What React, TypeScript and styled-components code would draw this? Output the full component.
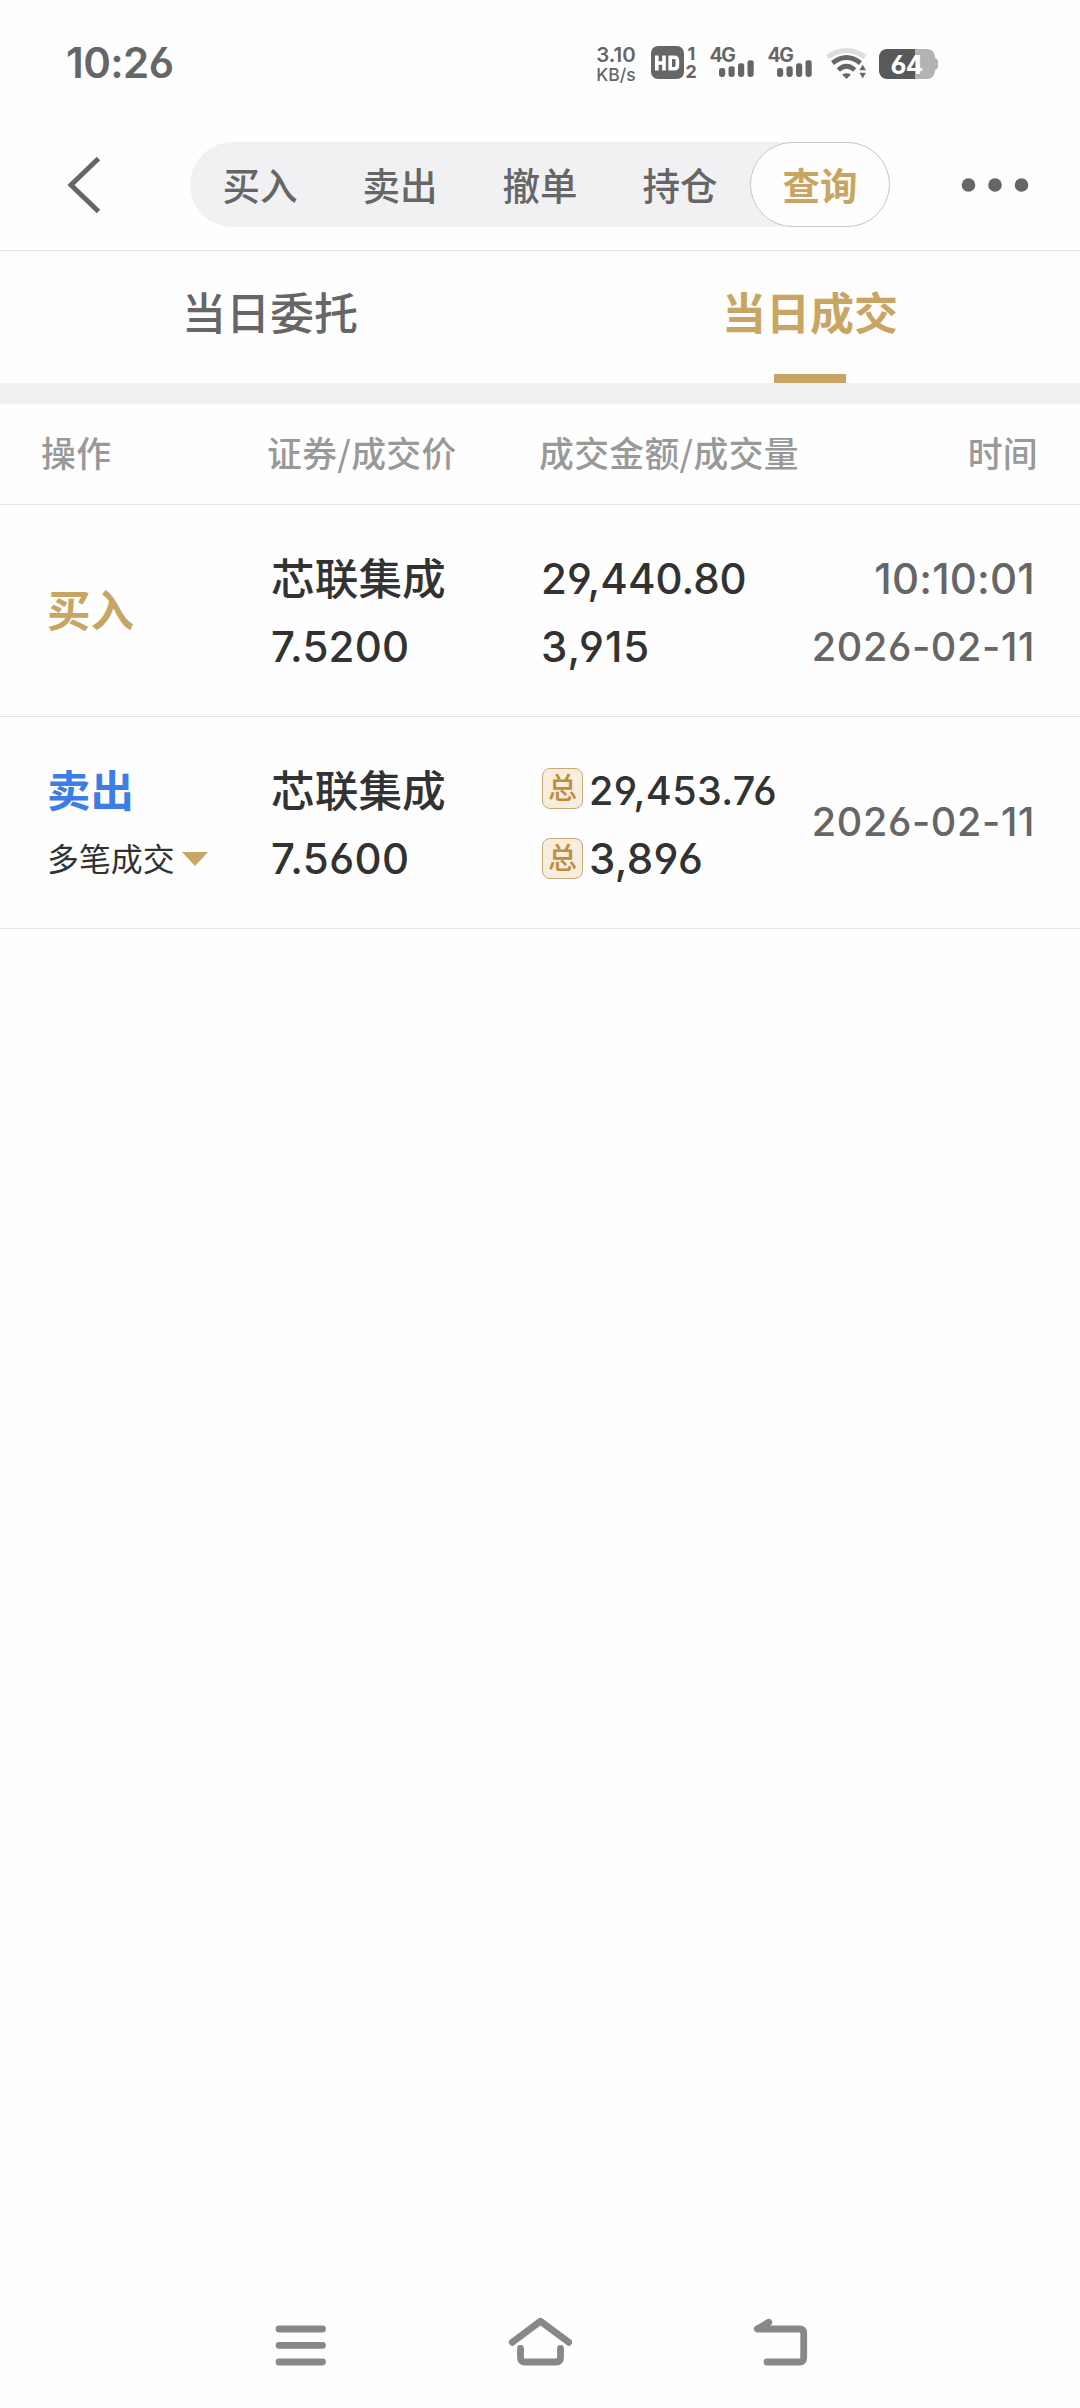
import React from "react";
import styled, { createGlobalStyle } from "styled-components";

const GOLD = "#c9a564";
const BLUE = "#3d7ee6";
const INK = "#323232";
const GREY = "#666666";
const LINE = "#e2e2e2";
const PANEL = "#f1f1f3";

const Global = createGlobalStyle`
  * { box-sizing: border-box; }
  body {
    margin: 0;
    background: #fefefe;
    font-family: Inter, "Noto Sans CJK SC", sans-serif;
    color: ${INK};
  }
`;

const Screen = styled.div`
  width: 1080px;
  height: 2408px;
  display: flex;
  flex-direction: column;
  background: #fefefe;
  overflow: hidden;
`;

const StatusBar = styled.header`
  height: 120px;
  display: flex;
  align-items: flex-start;
  padding: 40px 142px 0 66px;
  color: ${GREY};
`;

const Clock = styled.div`
  flex: 1;
  height: 46px;
  line-height: 46px;
  font-size: 42px;
  font-weight: 600;
  letter-spacing: -0.6px;
  font-feature-settings: "cv03", "cv04";
`;

const NetSpeed = styled.div`
  width: 42px;
  margin-top: 5px;
  display: flex;
  flex-direction: column;
  align-items: center;
  white-space: nowrap;
`;

const SpeedLine = styled.span<{ $size: number; $weight: number; $height: number }>`
  font-size: ${(p) => p.$size}px;
  font-weight: ${(p) => p.$weight};
  line-height: ${(p) => p.$height}px;
`;

const StatusIcons = styled.svg`
  display: block;
  flex: none;
  margin-left: 13px;
  font-family: Inter, sans-serif;
`;

const TopBar = styled.nav`
  height: 131px;
  display: flex;
  align-items: center;
  padding: 0 50px 1px 66px;
  border-bottom: 1px solid ${LINE};
`;

const Segments = styled.div`
  display: flex;
  flex: none;
  width: 700px;
  height: 85px;
  margin: 0 70px 0 88px;
  border-radius: 43px;
  background: ${PANEL};
`;

const Segment = styled.button<{ $active?: boolean }>`
  flex: 1;
  padding: 0 0 3px;
  border: 1px solid ${(p) => (p.$active ? "#c8c8c8" : "transparent")};
  border-radius: 43px;
  background: ${(p) => (p.$active ? "#fefefe" : "transparent")};
  color: ${(p) => (p.$active ? GOLD : GREY)};
  font: ${(p) => (p.$active ? 700 : 500)} 37.5px "Noto Sans CJK SC", sans-serif;
`;

const TopTabs = styled.div`
  display: flex;
  height: 132px;
`;

const Tab = styled.button<{ $active?: boolean }>`
  flex: 1;
  display: flex;
  flex-direction: column;
  align-items: center;
  justify-content: space-between;
  padding: 27px 0 0;
  border: 0;
  background: none;
  color: ${(p) => (p.$active ? GOLD : GREY)};
  font: ${(p) => (p.$active ? 700 : 500)} 44px/66px "Noto Sans CJK SC", sans-serif;

  &::after {
    content: "";
    width: 72px;
    height: 9px;
    background: ${(p) => (p.$active ? GOLD : "transparent")};
  }
`;

const Band = styled.div`
  height: 21px;
  background: ${PANEL};
`;

const HeadRow = styled.div`
  display: grid;
  grid-template-columns: 226px 272px 1fr 100px;
  align-items: center;
  height: 101px;
  padding: 0 42px 4px 41px;
  border-bottom: 1px solid ${LINE};
  color: #999999;
  font: 500 34.8px "Noto Sans CJK SC", sans-serif;
  letter-spacing: 0.35px;
  white-space: nowrap;

  & > :last-child { text-align: right; }
`;

const Row = styled.div`
  display: grid;
  grid-template-columns: 224px 270px 250px 1fr;
  height: 212px;
  padding: 40px 45px 0 47px;
  border-bottom: 1px solid ${LINE};
  white-space: nowrap;
`;

const Cell = styled.div<{ $right?: boolean; $pad?: number }>`
  display: flex;
  flex-direction: column;
  align-items: ${(p) => (p.$right ? "flex-end" : "flex-start")};
  padding-top: ${(p) => p.$pad ?? 0}px;
`;

const Side = styled.span<{ $color: string }>`
  height: 68px;
  line-height: 63px;
  font-family: "Noto Sans CJK SC", sans-serif;
  font-size: 43.5px;
  font-weight: 700;
  color: ${(p) => p.$color};
`;

const StockName = styled.span`
  height: 68px;
  line-height: 62px;
  font-family: "Noto Sans CJK SC", sans-serif;
  font-size: 43.7px;
  font-weight: 500;
`;

const Num = styled.span<{ $size?: number; $spacing?: number; $color?: string }>`
  height: 68px;
  line-height: 68px;
  font-size: ${(p) => p.$size ?? 42}px;
  font-weight: 500;
  letter-spacing: ${(p) => p.$spacing ?? 0}px;
  color: ${(p) => p.$color ?? INK};
  font-feature-settings: "cv03", "cv04";
`;

const Line = styled.div`
  display: flex;
  height: 68px;
`;

const TotalBadge = styled.span<{ $top: number }>`
  width: 41px;
  height: 41px;
  margin: ${(p) => p.$top}px 6px 0 1px;
  border: 1.5px solid #c9a873;
  border-radius: 8px;
  background: #f7eddd;
  color: #be8e3e;
  font: 500 29px/35px "Noto Sans CJK SC", sans-serif;
  text-align: center;
`;

const Multi = styled.div`
  display: flex;
  align-items: center;
  gap: 7px;
  height: 68px;
`;

const MultiLabel = styled.span`
  height: 68px;
  font: 400 31.9px/64px "Noto Sans CJK SC", sans-serif;
`;

const Caret = styled.i`
  border: 13px solid transparent;
  border-top: 14px solid ${GOLD};
  border-bottom: 0;
`;

const SystemNav = styled.footer`
  display: flex;
  justify-content: space-between;
  margin-top: auto;
  height: 108px;
  padding: 16px 268px 0;
`;

const NavIcon = styled.svg`
  fill: none;
  stroke: #888888;
  stroke-width: 6.8;
  stroke-linecap: round;
  stroke-linejoin: round;
`;

const BARS = [
  [0, 9],
  [9.5, 10.8],
  [19, 13.8],
  [28.5, 16.8],
];

function Signal({ x }: { x: number }) {
  return (
    <g transform={`translate(${x} 0)`} fill={GREY}>
      <text x="-0.5" y="22" fontSize="19.5" fontWeight="700" letterSpacing="-1.4">
        4G
      </text>
      {BARS.map(([bx, h]) => (
        <rect key={bx} x={9 + bx} y={37 - h} width="6.2" height={h} rx="2.4" />
      ))}
    </g>
  );
}

/* Origin of this drawing is (650, 40) on the screen. */
function StatusGlyphs() {
  return (
    <StatusIcons width="288" height="46" viewBox="0 0 288 46">
      <rect x="1" y="6" width="33" height="33" rx="7" fill={GREY} />
      <path
        d="M6.8 15.5v15M14 15.5v15M6.8 23h7.200M20.200 17.300v11.400h4q3.200 0 3.200-3.200v-5q0-3.200-3.200-3.200z"
        fill="none"
        stroke="#fefefe"
        strokeWidth="3.6"
      />
      <text x="37.5" y="20" fontSize="18" fontWeight="700" fill={GREY}>1</text>
      <text x="35.6" y="38" fontSize="18" fontWeight="700" fill={GREY}>2</text>
      <Signal x={60} />
      <Signal x={118} />
      <g fill="none" strokeWidth="4.8">
        <path d="M177.5 17Q196.500 4 215 17" stroke="#dddddd" />
        <path d="M182.500 23Q196.500 12 210.500 23" stroke={GREY} />
        <path d="M188.300 30Q196.500 22.500 204.700 30" stroke={GREY} />
      </g>
      <path d="M192 34.500Q196.500 31.800 201 34.500L196.500 39z" fill={GREY} />
      <path d="M209 30.500l3.700-6.500 3.700 6.500zM209 32.500l3.700 6.500 3.700-6.500z" fill={GREY} stroke="#fefefe" strokeWidth="0.6" />
      <rect x="278" y="18" width="10" height="12" rx="4" fill="#b3b3b3" />
      <path d="M236 9h41a8 8 0 0 1 8 8v14a8 8 0 0 1-8 8h-41z" fill="#b3b3b3" />
      <path d="M265 9v30h-28a8 8 0 0 1-8-8V17a8 8 0 0 1 8-8z" fill="#595959" />
      <text
        x="240.500"
        y="33.500"
        fontSize="26"
        fontWeight="700"
        letterSpacing="-0.8"
        fill="#fefefe"
        style={{ fontFeatureSettings: '"cv03"' }}
      >
        64
      </text>
    </StatusIcons>
  );
}

const SEGMENTS = ["买入", "卖出", "撤单", "持仓", "查询"];

export default function App() {
  return (
    <>
      <Global />
      <Screen>
        <StatusBar>
          <Clock>10:26</Clock>
          <NetSpeed>
            <SpeedLine $size={20.5} $weight={600} $height={20}>3.10</SpeedLine>
            <SpeedLine $size={17.5} $weight={500} $height={20}>KB/s</SpeedLine>
          </NetSpeed>
          <StatusGlyphs />
        </StatusBar>

        <TopBar>
          <svg width="36" height="62" viewBox="0 0 36 62" fill="none" stroke={GREY} strokeWidth="5">
            <path d="M32.500 4.500L5 31l27.500 26.500" />
          </svg>
          <Segments>
            {SEGMENTS.map((name) => (
              <Segment key={name} $active={name === "查询"}>
                {name}
              </Segment>
            ))}
          </Segments>
          <svg width="70" height="14" viewBox="0 0 70 14" fill={GREY}>
            <circle cx="8.500" cy="7" r="6.800" />
            <circle cx="35" cy="7" r="6.800" />
            <circle cx="61.500" cy="7" r="6.800" />
          </svg>
        </TopBar>

        <TopTabs>
          <Tab>当日委托</Tab>
          <Tab $active>当日成交</Tab>
        </TopTabs>
        <Band />

        <HeadRow>
          <span>操作</span>
          <span>证券/成交价</span>
          <span>成交金额/成交量</span>
          <span>时间</span>
        </HeadRow>

        <Row>
          <Cell $pad={32}>
            <Side $color={GOLD}>买入</Side>
          </Cell>
          <Cell>
            <StockName>芯联集成</StockName>
            <Num $spacing={0.2}>7.5200</Num>
          </Cell>
          <Cell>
            <Num>29,440.80</Num>
            <Num $spacing={1}>3,915</Num>
          </Cell>
          <Cell $right>
            <Num $color={GREY} $spacing={0.2}>10:10:01</Num>
            <Num $size={39.5} $color={GREY} $spacing={0.65}>2026-02-11</Num>
          </Cell>
        </Row>

        <Row>
          <Cell>
            <Side $color={BLUE}>卖出</Side>
            <Multi>
              <MultiLabel>多笔成交</MultiLabel>
              <Caret />
            </Multi>
          </Cell>
          <Cell>
            <StockName>芯联集成</StockName>
            <Num $spacing={0.4}>7.5600</Num>
          </Cell>
          <Cell>
            <Line>
              <TotalBadge $top={11}>总</TotalBadge>
              <Num $size={39.5} $spacing={0.35}>29,453.76</Num>
            </Line>
            <Line>
              <TotalBadge $top={13}>总</TotalBadge>
              <Num $spacing={0.3}>3,896</Num>
            </Line>
          </Cell>
          <Cell $right $pad={31}>
            <Num $size={39.5} $color={GREY} $spacing={0.65}>2026-02-11</Num>
          </Cell>
        </Row>

        <SystemNav>
          <NavIcon width="64" height="60" viewBox="268 2316 64 60">
            <path d="M279 2329h43.500M279 2345.300h43.500M279 2362h43.500" />
          </NavIcon>
          <NavIcon width="64" height="60" viewBox="508 2316 64 60">
            <path d="M512.300 2342.300L540.400 2321.300 568.800 2342.300M520.500 2348.500v9q0 4.500 4.500 4.500h31q4.500 0 4.500-4.500v-9" />
          </NavIcon>
          <NavIcon width="64" height="60" viewBox="748 2316 64 60">
            <path d="M768.800 2322.300L757.300 2329H799.500q4.200 0 4.200 4.200v24.600q0 4.200-4.200 4.200H767" />
          </NavIcon>
        </SystemNav>
      </Screen>
    </>
  );
}
